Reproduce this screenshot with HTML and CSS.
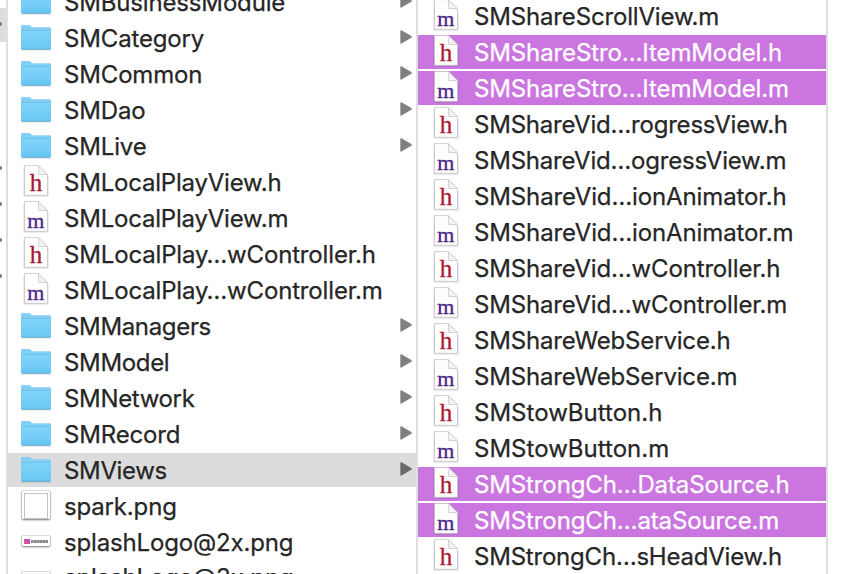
FILE: index.html
```
<!DOCTYPE html>
<html lang="en">
<head>
<meta charset="utf-8">
<title>Files</title>
<link rel="stylesheet" href="styles.css">
</head>
<body>
<svg class="defs" aria-hidden="true">
  <defs>
    <linearGradient id="blue" x1="0" y1="0" x2="0" y2="1"><stop offset="0" stop-color="#82d4f9"/><stop offset="1" stop-color="#68c7f3"/></linearGradient>
    <symbol id="folder" viewBox="0 0 32 34">
      <path d="M1.5 28.900h29" stroke="#000" stroke-opacity=".16" stroke-width="1.2"/>
      <path d="M1 28V5.200Q1 4 2.200 4H9q1 0 1.600.6L12 6.200h17.800Q31 6.200 31 7.400V28z" fill="#83cff5"/>
      <path d="M1 9.500h30V27q0 1.300-1.300 1.300H2.300Q1 28.300 1 27z" fill="url(#blue)"/>
      <path d="M1 9.400h30" stroke="#68bce6" stroke-width=".8"/>
      <path d="M1.400 28.200h29.200" stroke="#56a9d0" stroke-width=".9"/>
    </symbol>
    <symbol id="page" viewBox="0 0 32 34">
      <path d="M4.500 2V30.400h23V12" fill="none" stroke="#000" stroke-opacity=".14" stroke-width="2"/>
      <path d="M4.500.600H18.600L27.500 9.500V30.300h-23z" fill="#fff" stroke="#c4c4c4" stroke-width=".8"/>
      <path d="M18.600.800V9.500h8.700z" fill="#f3f3f3" stroke="#cecece" stroke-width=".9"/>
    </symbol>
    <symbol id="tri" viewBox="0 0 12 14"><path d="M.300.900Q.300-.200 1.500.300L11.300 6Q12.500 6.900 11.300 7.800L1.500 13.500Q.300 14 .300 13z" fill="currentColor"/></symbol>
    <symbol id="h" viewBox="0 0 32 34"><use href="#page"/><text class="glyph glyph-h" x="15.900" y="26.300">h</text></symbol>
    <symbol id="m" viewBox="0 0 32 34"><use href="#page"/><text class="glyph glyph-m" x="15.900" y="26.600">m</text></symbol>
  </defs>
</svg>
<main class="browser">
  <section class="column edge">
    <div class="row open"><i class="dot"></i></div>
    <div class="row gap"></div><div class="row gap"></div><div class="row gap"></div>
    <div class="row"><i class="dot"></i></div>
    <div class="row"><i class="dot"></i></div>
    <div class="row"><i class="dot"></i></div>
    <div class="row"><i class="dot"></i></div>
  </section>
  <section class="column parent">
    <div class="row"><svg class="icon"><use href="#folder"/></svg><span>SMBusinessModule</span><svg class="arrow"><use href="#tri"/></svg></div>
    <div class="row"><svg class="icon"><use href="#folder"/></svg><span>SMCategory</span><svg class="arrow"><use href="#tri"/></svg></div>
    <div class="row"><svg class="icon"><use href="#folder"/></svg><span>SMCommon</span><svg class="arrow"><use href="#tri"/></svg></div>
    <div class="row"><svg class="icon"><use href="#folder"/></svg><span>SMDao</span><svg class="arrow"><use href="#tri"/></svg></div>
    <div class="row"><svg class="icon"><use href="#folder"/></svg><span>SMLive</span><svg class="arrow"><use href="#tri"/></svg></div>
    <div class="row"><svg class="icon"><use href="#h"/></svg><span class="tight">SMLocalPlayView.h</span></div>
    <div class="row"><svg class="icon"><use href="#m"/></svg><span class="tight">SMLocalPlayView.m</span></div>
    <div class="row"><svg class="icon"><use href="#h"/></svg><span>SMLocalPlay…wController.h</span></div>
    <div class="row"><svg class="icon"><use href="#m"/></svg><span>SMLocalPlay…wController.m</span></div>
    <div class="row"><svg class="icon"><use href="#folder"/></svg><span class="short">SMManagers</span><svg class="arrow"><use href="#tri"/></svg></div>
    <div class="row"><svg class="icon"><use href="#folder"/></svg><span class="short">SMModel</span><svg class="arrow"><use href="#tri"/></svg></div>
    <div class="row"><svg class="icon"><use href="#folder"/></svg><span class="short">SMNetwork</span><svg class="arrow"><use href="#tri"/></svg></div>
    <div class="row"><svg class="icon"><use href="#folder"/></svg><span>SMRecord</span><svg class="arrow"><use href="#tri"/></svg></div>
    <div class="row open"><svg class="icon"><use href="#folder"/></svg><span class="short">SMViews</span><svg class="arrow"><use href="#tri"/></svg></div>
    <div class="row"><b class="thumb spark"></b><span>spark.png</span></div>
    <div class="row"><b class="thumb splash"></b><span>splashLogo@2x.png</span></div>
    <div class="row last"><b class="thumb splash"></b><span>splashLogo@3x.png</span></div>
  </section>
  <section class="column files">
    <div class="row"><svg class="icon"><use href="#m"/></svg><span>SMShareScrollView.m</span></div>
    <div class="row picked"><svg class="icon"><use href="#h"/></svg><span class="roomy">SMShareStro…ItemModel.h</span></div>
    <div class="row picked"><svg class="icon"><use href="#m"/></svg><span class="roomy">SMShareStro…ItemModel.m</span></div>
    <div class="row"><svg class="icon"><use href="#h"/></svg><span class="tight">SMShareVid…rogressView.h</span></div>
    <div class="row"><svg class="icon"><use href="#m"/></svg><span class="tight">SMShareVid…ogressView.m</span></div>
    <div class="row"><svg class="icon"><use href="#h"/></svg><span class="roomy">SMShareVid…ionAnimator.h</span></div>
    <div class="row"><svg class="icon"><use href="#m"/></svg><span class="roomy">SMShareVid…ionAnimator.m</span></div>
    <div class="row"><svg class="icon"><use href="#h"/></svg><span>SMShareVid…wController.h</span></div>
    <div class="row"><svg class="icon"><use href="#m"/></svg><span>SMShareVid…wController.m</span></div>
    <div class="row"><svg class="icon"><use href="#h"/></svg><span>SMShareWebService.h</span></div>
    <div class="row"><svg class="icon"><use href="#m"/></svg><span>SMShareWebService.m</span></div>
    <div class="row"><svg class="icon"><use href="#h"/></svg><span class="wide">SMStowButton.h</span></div>
    <div class="row"><svg class="icon"><use href="#m"/></svg><span class="wide">SMStowButton.m</span></div>
    <div class="row picked"><svg class="icon"><use href="#h"/></svg><span class="roomy">SMStrongCh…DataSource.h</span></div>
    <div class="row picked"><svg class="icon"><use href="#m"/></svg><span class="roomy">SMStrongCh…ataSource.m</span></div>
    <div class="row"><svg class="icon"><use href="#h"/></svg><span class="tight">SMStrongCh…sHeadView.h</span></div>
  </section>
</main>
</body>
</html>
```
FILE: styles.css
```
* { box-sizing: border-box; }
body { margin: 0; background: #fff; overflow: hidden; }
.defs { display: block; width: 0; height: 0; }
.browser { display: flex; height: 574px; overflow: hidden; font: 24px/34px Inter, "Liberation Sans", sans-serif; color: #262626; }
.column { flex: none; border-right: 2px solid #dfdfdf; height: 620px; }
.edge { width: 8px; padding-top: 8px; overflow: hidden; }
.parent { width: 410px; margin-top: -15px; }
.files { width: 410px; margin-top: -1px; }
.row { display: flex; height: 34px; margin-bottom: 2px; white-space: pre; }
.parent .row, .files .row { padding-left: 12px; }
.row span { margin-left: 12px; padding-top: 1px; flex: 1; letter-spacing: -0.16px; -webkit-text-stroke: 0.25px currentColor; }
.row .tight { letter-spacing: -0.21px; }
.row .short { letter-spacing: -0.34px; }
.row .roomy { letter-spacing: -0.12px; }
.row .wide { letter-spacing: 0.02px; }
.row.last span { padding-top: 0; }
.icon { width: 32px; height: 34px; flex: none; }
.arrow { width: 12px; height: 14px; margin: 9px 4px 0 0; color: #808080; flex: none; }
.open { background: #dcdcdc; }
.open .arrow { color: #6c6c6c; }
.picked { background: #cb76e0; color: #fff; }
.dot { width: 4px; height: 4px; margin: 14px 0 0 -2px; border-radius: 2px; background: #777; }
.glyph { font-family: "Liberation Serif", serif; text-anchor: middle; stroke-width: 0.3px; }
.glyph-h { fill: #ad1732; stroke: #ad1732; font-size: 25px; }
.glyph-m { fill: #4b2589; stroke: #4b2589; font-size: 22px; }
.thumb { display: block; flex: none; background: #fff; box-shadow: 0 1px 2px #0007, 0 0 1px #0009; }
.spark { width: 28px; height: 28px; margin: 2px; padding: 2px; }
.spark::before { content: ""; display: block; height: 24px; border: 1px solid #c4c4c4; }
.splash { width: 28px; height: 10px; margin: 11px 2px; padding: 2px; display: flex; align-items: center; gap: 1px; }
.splash::before { content: ""; width: 6px; height: 5px; background: linear-gradient(45deg, #f05b7a, #a44bd8); }
.splash::after { content: ""; width: 17px; height: 3px; background: repeating-linear-gradient(90deg, #888 0 2px, #aaa 2px 3px); }
```
